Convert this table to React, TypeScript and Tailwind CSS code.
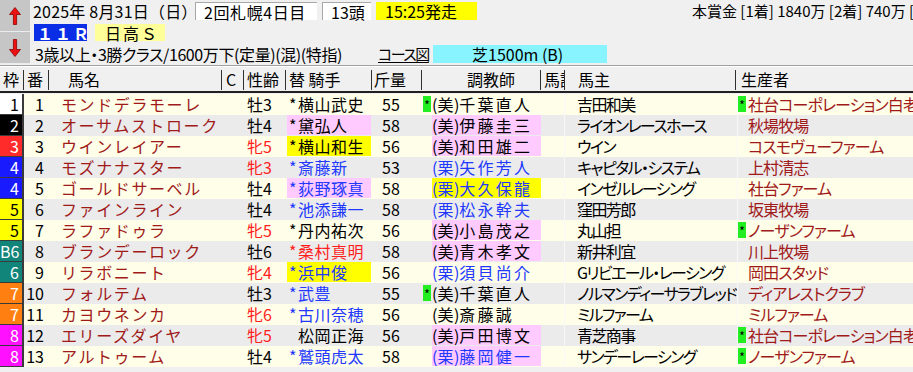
import React from "react";

type Row = {
  waku: string;
  wc: string;
  num: number;
  name: string;
  sex: string;
  jockey: string;
  star: boolean;
  jc: string;
  jb: string;
  wt: string;
  tm: boolean;
  trainer: string;
  tc: string;
  tb: string;
  owner: string;
  bm: boolean;
  breeder: string;
};

const K = "text-black";
const B = "text-[#2238ff]";
const R = "text-[#ff1e1e]";
const PINK = "bg-[#ffcaff]";
const YEL = "bg-[#ffff00]";

const WAKU: Record<string, string> = {
  "1": "bg-white text-black",
  "2": "bg-black text-white",
  "3": "bg-[#ff2a2a] text-white",
  "4": "bg-[#1a1aff] text-white",
  "5": "bg-[#ffff00] text-black",
  "6": "bg-[#12857a] text-white",
  "7": "bg-[#ff7f10] text-white",
  "8": "bg-[#ff10ff] text-white",
};

const rows: Row[] = [
  { waku: "1", wc: "1", num: 1, name: "モンドデラモーレ", sex: "牡3", jockey: "横山武史", star: true, jc: K, jb: "", wt: "55", tm: true, trainer: "(美)千葉直人", tc: K, tb: "", owner: "吉田和美", bm: true, breeder: "社台コーポレーション白老" },
  { waku: "2", wc: "2", num: 2, name: "オーサムストローク", sex: "牡4", jockey: "黛弘人", star: true, jc: K, jb: PINK, wt: "58", tm: false, trainer: "(美)伊藤圭三", tc: K, tb: PINK, owner: "ライオンレースホース", bm: false, breeder: "秋場牧場" },
  { waku: "3", wc: "3", num: 3, name: "ウインレイアー", sex: "牝5", jockey: "横山和生", star: true, jc: K, jb: YEL, wt: "56", tm: false, trainer: "(美)和田雄二", tc: K, tb: PINK, owner: "ウイン", bm: false, breeder: "コスモヴューファーム" },
  { waku: "4", wc: "4", num: 4, name: "モズナナスター", sex: "牝3", jockey: "斎藤新", star: true, jc: B, jb: "", wt: "53", tm: false, trainer: "(栗)矢作芳人", tc: B, tb: "", owner: "キャピタル・システム", bm: false, breeder: "上村清志" },
  { waku: "4", wc: "4", num: 5, name: "ゴールドサーベル", sex: "牡4", jockey: "荻野琢真", star: true, jc: B, jb: PINK, wt: "58", tm: false, trainer: "(栗)大久保龍", tc: B, tb: YEL, owner: "インゼルレーシング", bm: false, breeder: "社台ファーム" },
  { waku: "5", wc: "5", num: 6, name: "ファインライン", sex: "牡4", jockey: "池添謙一", star: true, jc: B, jb: "", wt: "58", tm: false, trainer: "(栗)松永幹夫", tc: B, tb: "", owner: "窪田芳郎", bm: false, breeder: "坂東牧場" },
  { waku: "5", wc: "5", num: 7, name: "ラファドゥラ", sex: "牝5", jockey: "丹内祐次", star: true, jc: K, jb: "", wt: "56", tm: false, trainer: "(美)小島茂之", tc: K, tb: PINK, owner: "丸山担", bm: true, breeder: "ノーザンファーム" },
  { waku: "B6", wc: "6", num: 8, name: "ブランデーロック", sex: "牡6", jockey: "桑村真明", star: true, jc: R, jb: "", wt: "58", tm: false, trainer: "(美)青木孝文", tc: K, tb: PINK, owner: "新井利宜", bm: false, breeder: "川上牧場" },
  { waku: "6", wc: "6", num: 9, name: "リラボニート", sex: "牝4", jockey: "浜中俊", star: true, jc: B, jb: YEL, wt: "56", tm: false, trainer: "(栗)須貝尚介", tc: B, tb: "", owner: "Gリビエール・レーシング", bm: false, breeder: "岡田スタッド" },
  { waku: "7", wc: "7", num: 10, name: "フォルテム", sex: "牡3", jockey: "武豊", star: true, jc: B, jb: "", wt: "55", tm: true, trainer: "(美)千葉直人", tc: K, tb: "", owner: "ノルマンディーサラブレッド", bm: false, breeder: "ディアレストクラブ" },
  { waku: "7", wc: "7", num: 11, name: "カヨウネンカ", sex: "牝6", jockey: "古川奈穂", star: true, jc: B, jb: "", wt: "56", tm: false, trainer: "(美)斎藤誠", tc: K, tb: "", owner: "ミルファーム", bm: false, breeder: "ミルファーム" },
  { waku: "8", wc: "8", num: 12, name: "エリーズダイヤ", sex: "牝5", jockey: "松岡正海", star: false, jc: K, jb: "", wt: "56", tm: false, trainer: "(美)戸田博文", tc: K, tb: PINK, owner: "青芝商事", bm: true, breeder: "社台コーポレーション白老" },
  { waku: "8", wc: "8", num: 13, name: "アルトゥーム", sex: "牡4", jockey: "鷲頭虎太", star: true, jc: B, jb: "", wt: "58", tm: false, trainer: "(栗)藤岡健一", tc: B, tb: PINK, owner: "サンデーレーシング", bm: true, breeder: "ノーザンファーム" },
];

const ArrowBtn = ({ up }: { up: boolean }) => (
  <div className="w-[30px] h-[32px] bg-[#c6c6c6] border-b border-[#ececec] flex items-center justify-center">
    <svg width="12" height="18" viewBox="0 0 12 18">
      {up ? (
        <path d="M6 0.5 L11.5 7.5 L7.6 7.5 L7.6 17.5 L4.4 17.5 L4.4 7.5 L0.5 7.5 Z" fill="#ee1111" stroke="#8a0000" strokeWidth="0.8" />
      ) : (
        <path d="M6 17.5 L11.5 10.5 L7.6 10.5 L7.6 0.5 L4.4 0.5 L4.4 10.5 L0.5 10.5 Z" fill="#ee1111" stroke="#8a0000" strokeWidth="0.8" />
      )}
    </svg>
  </div>
);

const Marker = () => (
  <div className="w-[8px] h-[16px] bg-[#22ee22] text-[12px] leading-[18px] text-black text-center">*</div>
);

const TableRow = ({ r, i }: { r: Row; i: number }) => {
  const bg = i % 2 === 0 ? "bg-[#fffee8]" : "bg-[#ebebeb]";
  return (
    <div className={`flex h-[21px] text-[16px] leading-[20px] ${bg}`}>
      <div className={`w-[24px] shrink-0 h-[21px] border-r-2 border-b border-[#3a3a3a] text-right pr-[3px] ${WAKU[r.wc]}`}>
        {r.waku}
      </div>
      <div className="w-[25px] shrink-0 text-right pr-[5px] text-black">{r.num}</div>
      <div className="w-[173px] shrink-0 pl-[12px] text-[#a01a1a] tracking-[1.6px] whitespace-nowrap">
        {r.name}
      </div>
      <div className="w-[22px] shrink-0" />
      <div className={`w-[42px] shrink-0 pl-[3px] ${r.sex.startsWith("牝") ? R : K}`}>{r.sex}</div>
      <div className="w-[86px] shrink-0 pl-[1px]">
        <div className={`h-[20px] w-[84px] pl-[2px] whitespace-nowrap flex ${r.jb} ${r.jc}`}>
          <span className={`w-[9px] ${r.star ? "" : "invisible"}`}>*</span>
          <span className="tracking-[0.5px]">{r.jockey}</span>
        </div>
      </div>
      <div className="w-[50px] shrink-0 pl-[10px] text-black">{r.wt}</div>
      <div className="w-[10px] shrink-0 pl-[1px] pt-[2px]">{r.tm && <Marker />}</div>
      <div className={`w-[109px] shrink-0 h-[20px] whitespace-nowrap ${r.tb} ${r.tc}`}>
        <span>(</span>
        <span className="tracking-[0.5px]">{r.trainer.slice(1, 2)}</span>
        <span>)</span>
        <span className="tracking-[2.2px]">{r.trainer.slice(3)}</span>
      </div>
      <div className="w-[24px] shrink-0 border-r border-[#f8f8f8]" />
      <div className="w-[172px] shrink-0 pl-[12px] text-black whitespace-nowrap tracking-[-1.6px] [font-feature-settings:'palt']">
        {r.owner}
      </div>
      <div className="flex-1 min-w-0 flex border-l border-[#f8f8f8] whitespace-nowrap">
        <div className="w-[10px] shrink-0 pt-[2px]">{r.bm && <Marker />}</div>
        <div className="shrink-0 text-[#a01a1a] tracking-[-0.9px] [font-feature-settings:'palt']">{r.breeder}</div>
      </div>
    </div>
  );
};

const HeadCell = ({ w, pl, clip, children }: { w: string; pl: string; clip?: boolean; children?: React.ReactNode }) => (
  <div className={`${w} ${pl} shrink-0 h-[20px] border-r border-[#303030] whitespace-nowrap ${clip ? "overflow-hidden" : ""}`}>{children}</div>
);

export default function App() {
  return (
    <div className="w-[913px] h-[372px] overflow-hidden bg-[#f0f0f0] text-black font-['Noto_Sans_CJK_JP',sans-serif]">
      <div className="flex h-[65px]">
        <div className="flex flex-col w-[30px] shrink-0">
          <ArrowBtn up />
          <ArrowBtn up={false} />
        </div>
        <div className="flex-1 min-w-0 flex flex-col pl-[3px] text-[16px] leading-[18px] whitespace-nowrap">
          <div className="flex items-center h-[21px] pt-[1px]">
            <span className="w-[162px] shrink-0 tracking-[0.2px]">2025年 8月31日（日）</span>
            <span className="w-[122px] shrink-0 h-[18px] bg-white border-t border-l border-[#a8a8a8] pl-[8px] tracking-[0.6px]">2回札幌4日目</span>
            <span className="ml-[5px] w-[49px] shrink-0 h-[18px] bg-white border-t border-l border-[#a8a8a8] pl-[8px]">13頭</span>
            <span className="ml-[5px] w-[101px] shrink-0 h-[18px] bg-[#ffff00] pl-[9px]">15:25発走</span>
            <span className="ml-[215px] shrink-0 [font-feature-settings:'palt'] text-[15px]">本賞金 [1着] 1840万 [2着] 740万 [3着] 460万</span>
          </div>
          <div className="flex items-center h-[21px] pt-[2px]">
            <span className="ml-[1px] w-[53px] h-[17px] bg-[#0a2ee6] text-white font-bold pl-[3px] tracking-[2px]">１１Ｒ</span>
            <span className="ml-[8px] w-[70px] h-[17px] bg-[#ffff99] pl-[10px] tracking-[2px]">日高Ｓ</span>
          </div>
          <div className="flex items-center h-[22px] pt-[2px]">
            <span className="w-[345px] shrink-0 pl-[2px] tracking-[-0.4px] [font-feature-settings:'palt']">3歳以上・3勝クラス/1600万下(定量)(混)(特指)</span>
            <span className="w-[48px] shrink-0 underline underline-offset-2 text-[15px] tracking-[-1.5px] [font-feature-settings:'palt']">コース図</span>
            <span className="ml-[7px] w-[174px] shrink-0 h-[18px] bg-[#88f4ff] pl-[39px]">芝1500m (B)</span>
          </div>
        </div>
      </div>
      <div className="h-[2px] border-t border-[#a0a0a0] bg-white" />
      <div className="flex h-[24px] pt-[3px] text-[16px] leading-[19px] text-black">
        <HeadCell w="w-[24px]" pl="pl-[3px]">枠</HeadCell>
        <HeadCell w="w-[25px]" pl="pl-[3px]">番</HeadCell>
        <HeadCell w="w-[173px]" pl="pl-[19px]">馬名</HeadCell>
        <HeadCell w="w-[22px]" pl="pl-[4px]">C</HeadCell>
        <HeadCell w="w-[42px]" pl="pl-[3px]">性齢</HeadCell>
        <HeadCell w="w-[86px]" pl="pl-[3px]">替 騎手</HeadCell>
        <HeadCell w="w-[50px]" pl="pl-[2px]">斤量</HeadCell>
        <HeadCell w="w-[119px]" pl="pl-[45px]">調教師</HeadCell>
        <HeadCell w="w-[24px]" pl="pl-[3px]" clip>馬記</HeadCell>
        <HeadCell w="w-[171px]" pl="pl-[13px]">馬主</HeadCell>
        <div className="flex-1 pl-[5px]">生産者</div>
      </div>
      <div className="h-[2px] bg-[#202020]" />
      <div className="flex flex-col pt-[1px]">
        {rows.map((r, i) => (
          <TableRow key={r.num} r={r} i={i} />
        ))}
      </div>
    </div>
  );
}
